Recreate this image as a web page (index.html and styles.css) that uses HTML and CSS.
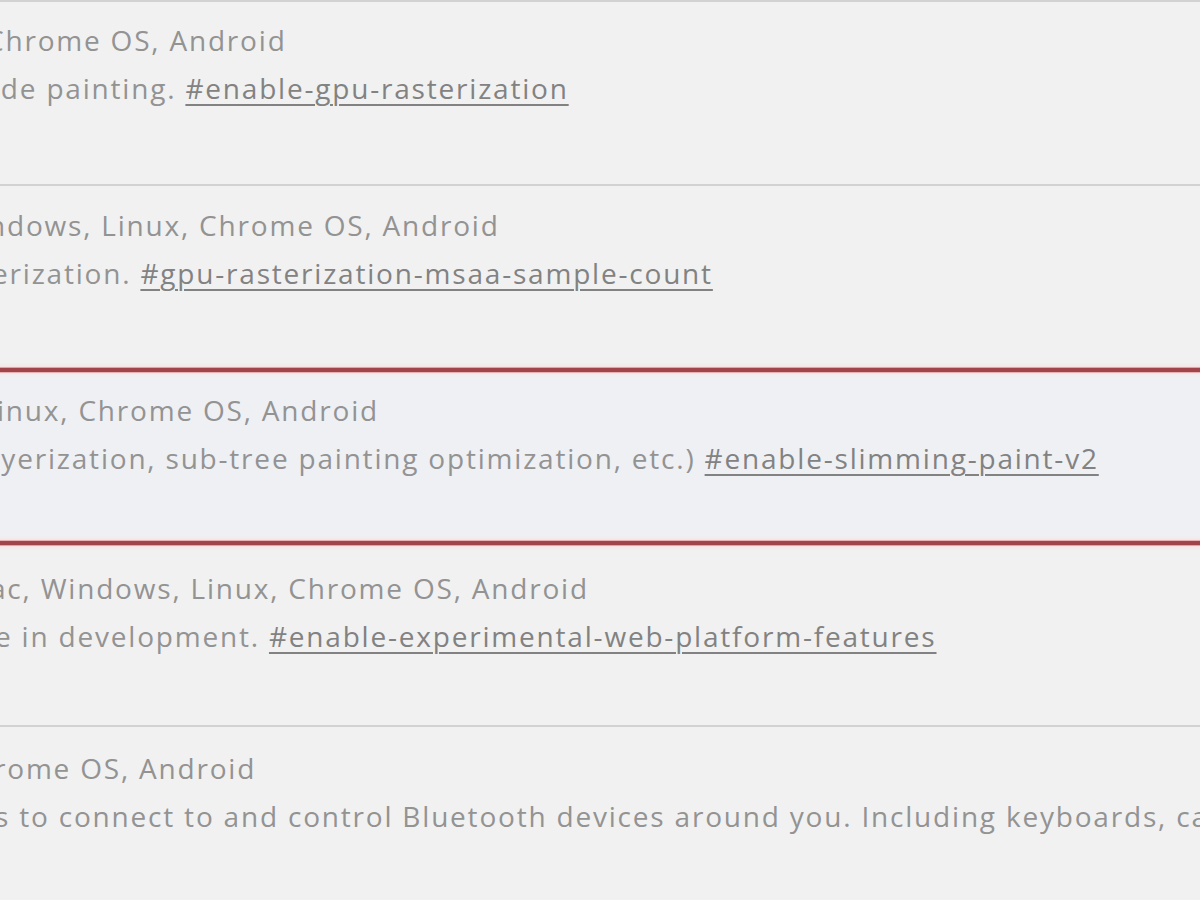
FILE: index.html
```html
<!DOCTYPE html>
<html lang="en">
<head>
<meta charset="utf-8">
<title>Experiments</title>
<link rel="stylesheet" href="styles.css">
</head>
<body>
<main class="list">
  <section class="row row-first">
    <p class="line l-platforms off-a">Chrome OS, Android</p>
    <p class="line l-desc off-b">ide painting. <a class="flag" href="#enable-gpu-rasterization">#enable-gpu-rasterization</a></p>
  </section>
  <section class="row row-second">
    <p class="line l-platforms off-g">ndows, Linux, Chrome OS, Android</p>
    <p class="line l-desc off-b">erization. <a class="flag" href="#gpu-rasterization-msaa-sample-count">#gpu-rasterization-msaa-sample-count</a></p>
  </section>
  <section class="row row-highlight">
    <p class="line l-platforms off-c">inux, Chrome OS, Android</p>
    <p class="line l-desc off-d">ayerization, sub-tree painting optimization, etc.) <a class="flag" href="#enable-slimming-paint-v2">#enable-slimming-paint-v2</a></p>
  </section>
  <section class="row row-after">
    <p class="line l-platforms off-e">ac, Windows, Linux, Chrome OS, Android</p>
    <p class="line l-desc off-f">e in development. <a class="flag" href="#enable-experimental-web-platform-features">#enable-experimental-web-platform-features</a></p>
  </section>
  <section class="row row-last">
    <p class="line l-platforms off-h">rome OS, Android</p>
    <p class="line l-desc off-f">s to connect to and control Bluetooth devices around you. Including keyboards, cameras, and more.</p>
  </section>
</main>
</body>
</html>
```
FILE: styles.css
```css
html, body {
  margin: 0;
  padding: 0;
  background: #f1f1f1;
  overflow: hidden;
}
body {
  width: 1200px;
  height: 900px;
  font-family: "Open Sans", "Noto Sans", sans-serif;
  font-size: 28px;
  letter-spacing: 1.8px;
  color: #939393;
}
.list {
  display: flex;
  flex-direction: column;
  margin: 0 -30px;
}
.row {
  box-sizing: border-box;
  padding-left: 30px;
  border-top: 2px solid #d2d2d2;
  white-space: nowrap;
}
.line {
  margin: 0;
  line-height: 48px;
}
.flag {
  color: #828282;
  text-decoration: underline;
  text-decoration-thickness: 2px;
  text-underline-offset: 5px;
}
.row-first { height: 184px; padding-top: 14px; }
.row-second { height: 184px; padding-top: 15px; }
.row-highlight {
  height: 177px;
  padding-top: 14px;
  border-top: 4px solid #a0464b;
  border-bottom: 4px solid #a0464b;
  background: #eff0f3;
  box-shadow: 0 0 0 1px #e4a4a7, 0 0 4px 2px #fbdcdd,
              inset 0 1px 0 0 #e9b1b3, inset 0 -1px 0 0 #e9b1b3,
              inset 0 3px 3px -1px #f8dfe0, inset 0 -3px 3px -1px #f8dfe0;
}
.row-after { height: 180px; padding-top: 19px; border-top: 0; }
.row-last { height: 175px; padding-top: 17px; }
.off-a { margin-left: -14px; }
.off-b { margin-left: -8px; }
.off-c { margin-left: -3px; }
.off-d { margin-left: -16px; }
.off-e { margin-left: -10px; }
.off-f { margin-left: -5px; }
.off-g { margin-left: -12px; }
.off-h { margin-left: -6px; }
```
